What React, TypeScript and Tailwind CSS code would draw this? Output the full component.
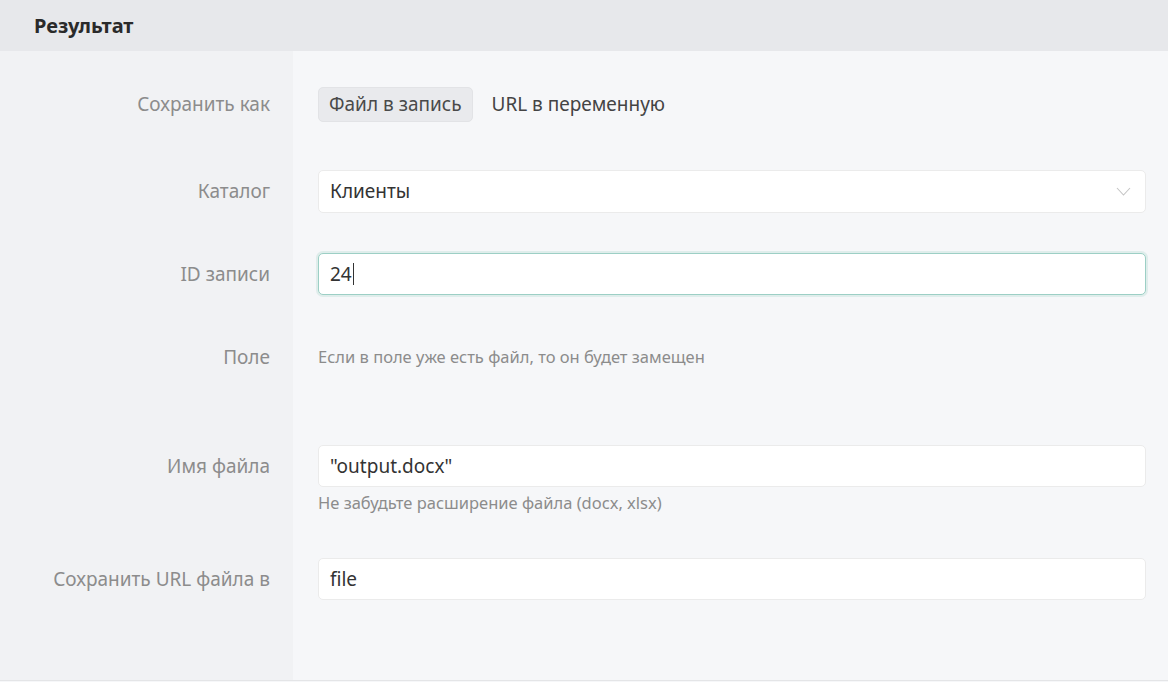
import React from 'react';

const font = { fontFamily: '"Noto Sans", "Liberation Sans", sans-serif' };

const Label: React.FC<{ text: string; h: string }> = ({ text, h }) => (
  <div className={`${h} flex items-center justify-end pr-[23px] text-[19px] text-[#8c8c8c]`}>{text}</div>
);

const App: React.FC = () => {
  return (
    <div className="w-[1168px] h-[682px] bg-[#f6f7f9] text-[#333] overflow-hidden" style={font}>
      {/* заголовок */}
      <div className="h-[51px] bg-[#e7e8eb] flex items-center pl-[34px]">
        <h3 className="text-[20px] font-bold text-[#2a2a2a]">Результат</h3>
      </div>

      <div className="h-[630px] border-b border-[#e4e5e7] grid grid-cols-[293px_1fr] content-start bg-[linear-gradient(to_right,#f1f2f4_293px,#f6f7f9_293px)]">
        {/* Сохранить как */}
        <div className="mt-[36px]"><Label text="Сохранить как" h="h-[35px]" /></div>
        <div className="mt-[36px] pl-[25px] pr-[22px] flex items-center gap-[19px] text-[19px]">
          <button className="h-[35px] px-[10px] rounded-[5px] bg-[#e9eaed] border border-[#e2e3e6] text-[#4a4a4a]">Файл в запись</button>
          <span className="text-[#444]">URL в переменную</span>
        </div>

        {/* Каталог */}
        <div className="mt-[48px]"><Label text="Каталог" h="h-[43px]" /></div>
        <div className="mt-[48px] pl-[25px] pr-[22px]">
          <div className="h-[43px] rounded-[5px] bg-white border border-[#ebebeb] flex items-center justify-between pl-[11px] pr-[14px] text-[19px]">
            <span>Клиенты</span>
            <svg width="15" height="9" viewBox="0 0 15 9" fill="none" stroke="#c4c4c4" strokeWidth="1.1">
              <path d="M1 1l6.5 7 6.5-7" />
            </svg>
          </div>
        </div>

        {/* ID записи */}
        <div className="mt-[40px]"><Label text="ID записи" h="h-[42px]" /></div>
        <div className="mt-[40px] pl-[25px] pr-[22px]">
          <div className="h-[42px] rounded-[5px] bg-white border border-[#9ccfc5] shadow-[0_0_0_2px_rgba(156,207,197,0.25)] flex items-center pl-[11px] text-[19px]">
            <span>24</span>
            <span className="w-px h-[22px] bg-[#333] ml-[1px]"></span>
          </div>
        </div>

        {/* Поле */}
        <div className="mt-[52px]"><Label text="Поле" h="h-[20px]" /></div>
        <div className="mt-[52px] pl-[25px] pr-[22px] h-[20px] flex items-center text-[16.5px] text-[#8c8c8c]">
          Если в поле уже есть файл, то он будет замещен
        </div>

        {/* Имя файла */}
        <div className="mt-[78px]"><Label text="Имя файла" h="h-[42px]" /></div>
        <div className="mt-[78px] pl-[25px] pr-[22px]">
          <div className="h-[42px] rounded-[5px] bg-white border border-[#ebebeb] flex items-center pl-[11px] text-[19px]">"output.docx"</div>
          <p className="mt-[5px] text-[16.5px] leading-[22px] text-[#8c8c8c]">Не забудьте расширение файла (docx, xlsx)</p>
        </div>

        {/* URL */}
        <div className="mt-[44px]"><Label text="Сохранить URL файла в" h="h-[42px]" /></div>
        <div className="mt-[44px] pl-[25px] pr-[22px]">
          <div className="h-[42px] rounded-[5px] bg-white border border-[#ebebeb] flex items-center pl-[11px] text-[19px]">file</div>
        </div>
      </div>
    </div>
  );
};

export default App;
